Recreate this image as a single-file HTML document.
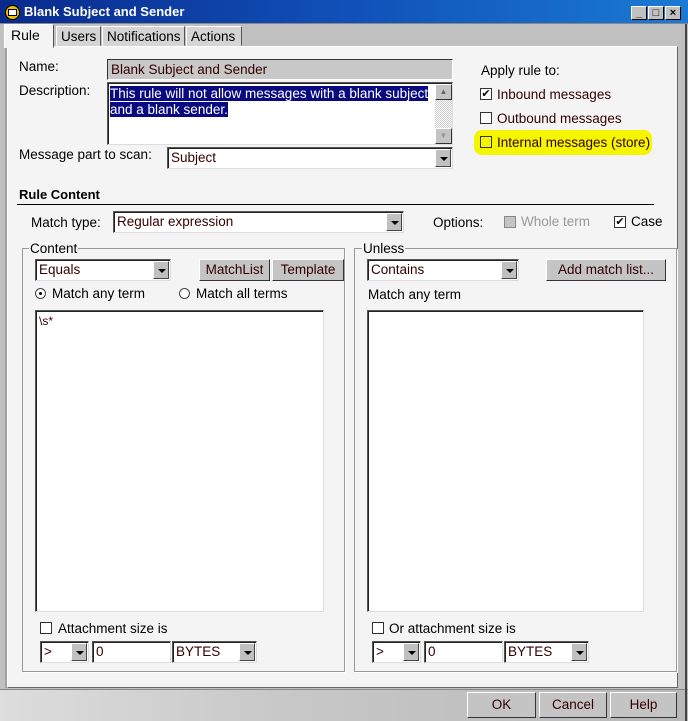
<!DOCTYPE html>
<html><head><meta charset="utf-8"><style>
*{box-sizing:border-box;margin:0;padding:0}
body{width:688px;height:721px;overflow:hidden;background:#c0c0c0;font-family:"Liberation Sans",sans-serif;font-size:13.5px;color:#000;position:relative}
.a{position:absolute;white-space:nowrap}
.title{left:0;top:0;width:688px;height:24px;background:linear-gradient(90deg,#0a2a8c,#1050b8 50%,#1a7ad4);border-bottom:1px solid #888}
.tb{width:16px;height:14px;background:#c0c0c0;border:1px solid;border-color:#fff #000 #000 #fff;font-size:11px;font-weight:bold;text-align:center;line-height:12px}
.tab{top:26px;height:20px;background:#d4d4d4;border:1px solid;border-color:#fff #555 transparent #fff;padding:2px 4px 0;font-size:13.5px}
.panel{left:7px;top:46px;width:671px;height:642px;background:#f4f4f4;border:1px solid;border-color:#fff #666 #666 #fff;box-shadow:-2px 0 0 #a0a0a0}
.fld{background:#fff;border:1px solid;border-color:#555 #ddd #ddd #555;box-shadow:inset 1px 1px 0 #222;padding:2px 3px;color:#300;font-size:13.5px;line-height:16px}
.dd{position:absolute;right:1px;top:1px;bottom:1px;width:16px;background:#c0c0c0;border:1px solid;border-color:#fff #444 #444 #fff}
.dd:after{content:"";position:absolute;left:4px;top:7px;border:4px solid transparent;border-top:4px solid #000;border-bottom:0}
.cb{width:12px;height:12px;background:#fff;border:1px solid #333}
.btn{background:#c4c4c4;border:1px solid;border-color:#fff #333 #333 #fff;text-align:center;line-height:20px;color:#300}
.grp{border:1px solid #999;box-shadow:1px 1px 0 #fff}
.lbl{background:#f4f4f4;padding:0 1px}
</style></head><body>
<div class="a title"></div>
<div class="a" style="left:5px;top:5px;width:15px;height:15px;border-radius:50%;background:#f0c000;border:1px solid #000"></div>
<div class="a" style="left:8px;top:9px;width:9px;height:7px;border:1px solid #000;background:#fff"></div>
<div class="a" style="left:24px;top:4px;color:#fff;font-weight:bold;font-size:13px">Blank Subject and Sender</div>
<div class="a tb" style="left:631px;top:6px">_</div>
<div class="a tb" style="left:648px;top:6px">□</div>
<div class="a tb" style="left:665px;top:6px">×</div>

<div class="a tab" style="left:56px;width:45px">Users</div>
<div class="a tab" style="left:102px;width:83px">Notifications</div>
<div class="a tab" style="left:186px;width:56px">Actions</div>
<div class="a panel"></div>
<div class="a tab" style="left:4px;top:24px;height:24px;width:50px;background:#f4f4f4;z-index:2;padding:2px 6px;font-size:14px">Rule</div>

<div class="a" style="left:19px;top:59px">Name:</div>
<div class="a fld" style="left:107px;top:59px;width:346px;height:21px;background:#c8c8c8;box-shadow:none;border-color:#333 #fff #fff #333">Blank Subject and Sender</div>
<div class="a" style="left:19px;top:83px">Description:</div>
<div class="a fld" style="left:107px;top:82px;width:346px;height:63px;padding:3px 2px"><span style="background:#0a0a80;color:#fff;line-height:16px">This rule will not allow messages with a blank subject<br>and a blank sender.</span></div>
<div class="a" style="left:435px;top:84px;width:17px;height:60px;background:repeating-conic-gradient(#ccc 0 25%,#fff 0 50%) 0 0/2px 2px"></div>
<div class="a btn" style="left:435px;top:84px;width:17px;height:16px;font-size:8px;line-height:14px;color:#666">▲</div>
<div class="a btn" style="left:435px;top:128px;width:17px;height:16px;font-size:8px;line-height:14px;color:#999">▼</div>
<div class="a" style="left:19px;top:147px">Message part to scan:</div>
<div class="a fld" style="left:167px;top:147px;width:286px;height:22px">Subject<div class="dd"></div></div>

<div class="a" style="left:481px;top:63px">Apply rule to:</div>
<div class="a" style="left:474px;top:130px;width:178px;height:25px;background:#f5f500;border-radius:8px"></div>
<div class="a cb" style="left:480px;top:88px;font-size:11px;line-height:10px;text-align:center">✔</div>
<div class="a" style="left:497px;top:87px;color:#300">Inbound messages</div>
<div class="a cb" style="left:480px;top:112px"></div>
<div class="a" style="left:497px;top:111px;color:#300">Outbound messages</div>
<div class="a cb" style="left:480px;top:136px;background:#f5f500"></div>
<div class="a" style="left:497px;top:135px;color:#300">Internal messages (store)</div>

<div class="a" style="left:19px;top:187px;font-weight:bold;font-size:13px">Rule Content</div>
<div class="a" style="left:17px;top:204px;width:637px;height:1px;background:#000"></div>
<div class="a" style="left:31px;top:215px">Match type:</div>
<div class="a fld" style="left:113px;top:211px;width:291px;height:22px">Regular expression<div class="dd"></div></div>
<div class="a" style="left:433px;top:215px">Options:</div>
<div class="a cb" style="left:504px;top:216px;background:#c4c4c4;border-color:#888"></div>
<div class="a" style="left:521px;top:214px;color:#999">Whole term</div>
<div class="a cb" style="left:614px;top:216px;font-size:11px;line-height:10px;text-align:center">✔</div>
<div class="a" style="left:631px;top:214px">Case</div>

<div class="a grp" style="left:22px;top:248px;width:323px;height:424px"></div>
<div class="a lbl" style="left:29px;top:241px">Content</div>
<div class="a fld" style="left:35px;top:259px;width:136px;height:22px">Equals<div class="dd"></div></div>
<div class="a btn" style="left:199px;top:259px;width:71px;height:22px">MatchList</div>
<div class="a btn" style="left:272px;top:259px;width:72px;height:22px">Template</div>
<div class="a" style="left:35px;top:288px;width:11px;height:11px;border-radius:50%;background:#fff;border:1px solid #444"></div>
<div class="a" style="left:39px;top:292px;width:3px;height:3px;border-radius:50%;background:#000"></div>
<div class="a" style="left:52px;top:286px">Match any term</div>
<div class="a" style="left:179px;top:288px;width:11px;height:11px;border-radius:50%;background:#fff;border:1px solid #444"></div>
<div class="a" style="left:196px;top:286px">Match all terms</div>
<div class="a fld" style="left:35px;top:310px;width:289px;height:302px;padding:2px 3px;font-size:12px">\s*</div>
<div class="a cb" style="left:40px;top:622px"></div>
<div class="a" style="left:58px;top:621px">Attachment size is</div>
<div class="a fld" style="left:40px;top:641px;width:49px;height:22px">&gt;<div class="dd"></div></div>
<div class="a fld" style="left:92px;top:641px;width:79px;height:22px">0</div>
<div class="a fld" style="left:172px;top:641px;width:85px;height:22px">BYTES<div class="dd"></div></div>

<div class="a grp" style="left:354px;top:248px;width:323px;height:424px"></div>
<div class="a lbl" style="left:362px;top:241px">Unless</div>
<div class="a fld" style="left:367px;top:259px;width:152px;height:22px">Contains<div class="dd"></div></div>
<div class="a btn" style="left:546px;top:259px;width:120px;height:22px">Add match list...</div>
<div class="a" style="left:368px;top:287px">Match any term</div>
<div class="a fld" style="left:367px;top:310px;width:277px;height:302px"></div>
<div class="a cb" style="left:372px;top:622px"></div>
<div class="a" style="left:389px;top:621px">Or attachment size is</div>
<div class="a fld" style="left:372px;top:641px;width:49px;height:22px">&gt;<div class="dd"></div></div>
<div class="a fld" style="left:424px;top:641px;width:79px;height:22px">0</div>
<div class="a fld" style="left:504px;top:641px;width:85px;height:22px">BYTES<div class="dd"></div></div>

<div class="a" style="left:0;top:689px;width:688px;height:32px;background:linear-gradient(90deg,#ddd,#c8c8c8 40%,#b8b8b8);border-top:1px solid #888"></div>
<div class="a btn" style="left:467px;top:692px;width:69px;height:26px;line-height:24px">OK</div>
<div class="a btn" style="left:539px;top:692px;width:68px;height:26px;line-height:24px">Cancel</div>
<div class="a btn" style="left:610px;top:692px;width:67px;height:26px;line-height:24px">Help</div>
<div class="a" style="left:685px;top:24px;width:2px;height:697px;background:#444"></div>
</body></html>
